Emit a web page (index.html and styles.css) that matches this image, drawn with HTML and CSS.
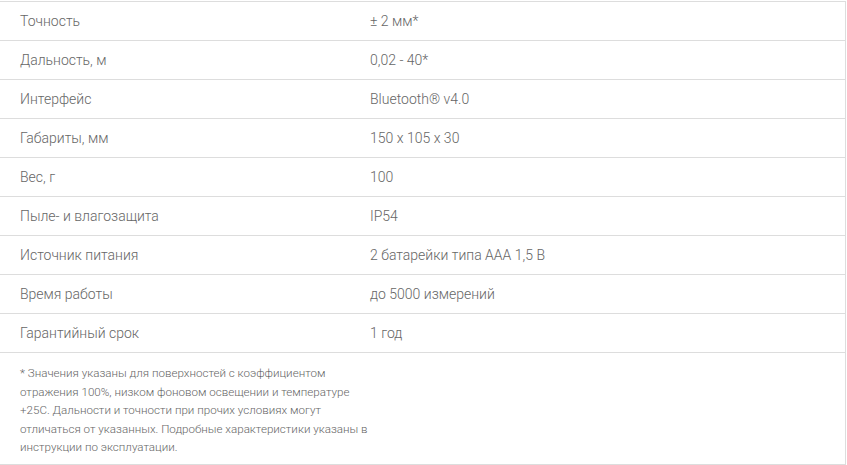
FILE: index.html
```html
<!DOCTYPE html>
<html lang="ru">
<head>
<meta charset="utf-8">
<title>Характеристики</title>
<link rel="stylesheet" href="styles.css">
</head>
<body>
<div class="wrap">
<table class="specs">
  <tbody>
    <tr><td class="name">Точность</td><td class="val">± 2 мм*</td></tr>
    <tr><td class="name">Дальность, м</td><td class="val">0,02 - 40*</td></tr>
    <tr><td class="name">Интерфейс</td><td class="val">Bluetooth® v4.0</td></tr>
    <tr><td class="name">Габариты, мм</td><td class="val">150 x 105 x 30</td></tr>
    <tr><td class="name">Вес, г</td><td class="val">100</td></tr>
    <tr><td class="name">Пыле- и влагозащита</td><td class="val">IP54</td></tr>
    <tr><td class="name">Источник питания</td><td class="val">2 батарейки типа AAA 1,5 В</td></tr>
    <tr><td class="name">Время работы</td><td class="val">до 5000 измерений</td></tr>
    <tr><td class="name">Гарантийный срок</td><td class="val">1 год</td></tr>
    <tr class="note-row"><td colspan="2" class="note"><p>* Значения указаны для поверхностей с коэффициентом<br>отражения 100%, низком фоновом освещении и температуре<br>+25С. Дальности и точности при прочих условиях могут<br>отличаться от указанных. Подробные характеристики указаны в<br>инструкции по эксплуатации.</p></td></tr>
  </tbody>
</table>
</div>
</body>
</html>
```
FILE: styles.css
```css
html, body {
  margin: 0;
  padding: 0;
  background: #fff;
}
.wrap {
  padding-top: 1px;
}
.specs {
  width: 846px;
  border-collapse: collapse;
  border-right: 1px solid #dddddd;
  font-family: Roboto, "Liberation Sans", Arial, sans-serif;
  font-size: 14px;
  font-weight: 300;
  color: #666666;
}
.specs tr {
  border-top: 1px solid #dddddd;
}
.specs td {
  height: 38px;
  padding: 0 20px;
  vertical-align: middle;
  line-height: 16px;
}
.specs td.name {
  width: 310px;
}
.specs tr.note-row {
  border-bottom: 1px solid #dddddd;
}
.specs td.note {
  height: auto;
  padding: 11px 20px 7px;
  vertical-align: top;
}
.note p {
  margin: 0;
  white-space: nowrap;
  font-size: 11.6px;
  line-height: 18.5px;
}
```
